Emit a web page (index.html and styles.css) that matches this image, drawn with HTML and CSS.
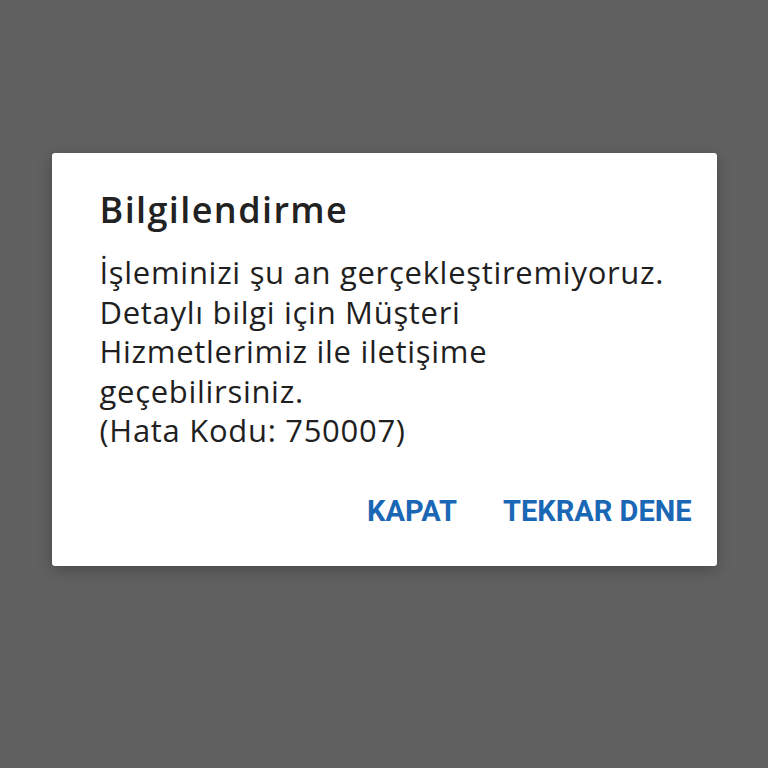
FILE: index.html
```html
<!DOCTYPE html>
<html lang="tr">
<head>
<meta charset="utf-8">
<link rel="stylesheet" href="styles.css">
</head>
<body>
<div class="screen">
  <div class="dialog">
    <h1 class="title">Bilgilendirme</h1>
    <p class="message">İşleminizi şu an gerçekleştiremiyoruz.<br>Detaylı bilgi için Müşteri<br>Hizmetlerimiz ile iletişime<br>geçebilirsiniz.<br>(Hata Kodu: 750007)</p>
    <div class="actions">
      <button class="btn">KAPAT</button>
      <button class="btn">TEKRAR DENE</button>
    </div>
  </div>
</div>
</body>
</html>
```
FILE: styles.css
```css
html, body {
  margin: 0;
  padding: 0;
}
body {
  width: 768px;
  height: 768px;
  background: #616161;
  font-family: "Open Sans", "Noto Sans", sans-serif;
}
.screen {
  display: flex;
  flex-direction: column;
  align-items: center;
  padding-top: 153px;
}
.dialog {
  width: 665px;
  height: 413px;
  box-sizing: border-box;
  background: #ffffff;
  border-radius: 3px;
  box-shadow: 0 4px 16px rgba(0,0,0,0.25);
  padding: 35px 25px 0 48px;
}
.title {
  margin: 0;
  font-size: 36px;
  font-weight: 600;
  letter-spacing: 1.4px;
  color: #222222;
  line-height: 44px;
}
.message {
  margin: 21px 0 0 0;
  font-size: 31px;
  line-height: 39.5px;
  letter-spacing: 0.7px;
  color: #1f1f1f;
}
.actions {
  display: flex;
  justify-content: flex-end;
  gap: 46px;
  margin-top: 43px;
}
.btn {
  border: 0;
  background: none;
  padding: 0;
  font-family: Roboto, sans-serif;
  font-size: 29px;
  line-height: 34px;
  font-weight: 700;
  color: #1a67b5;
}
```
